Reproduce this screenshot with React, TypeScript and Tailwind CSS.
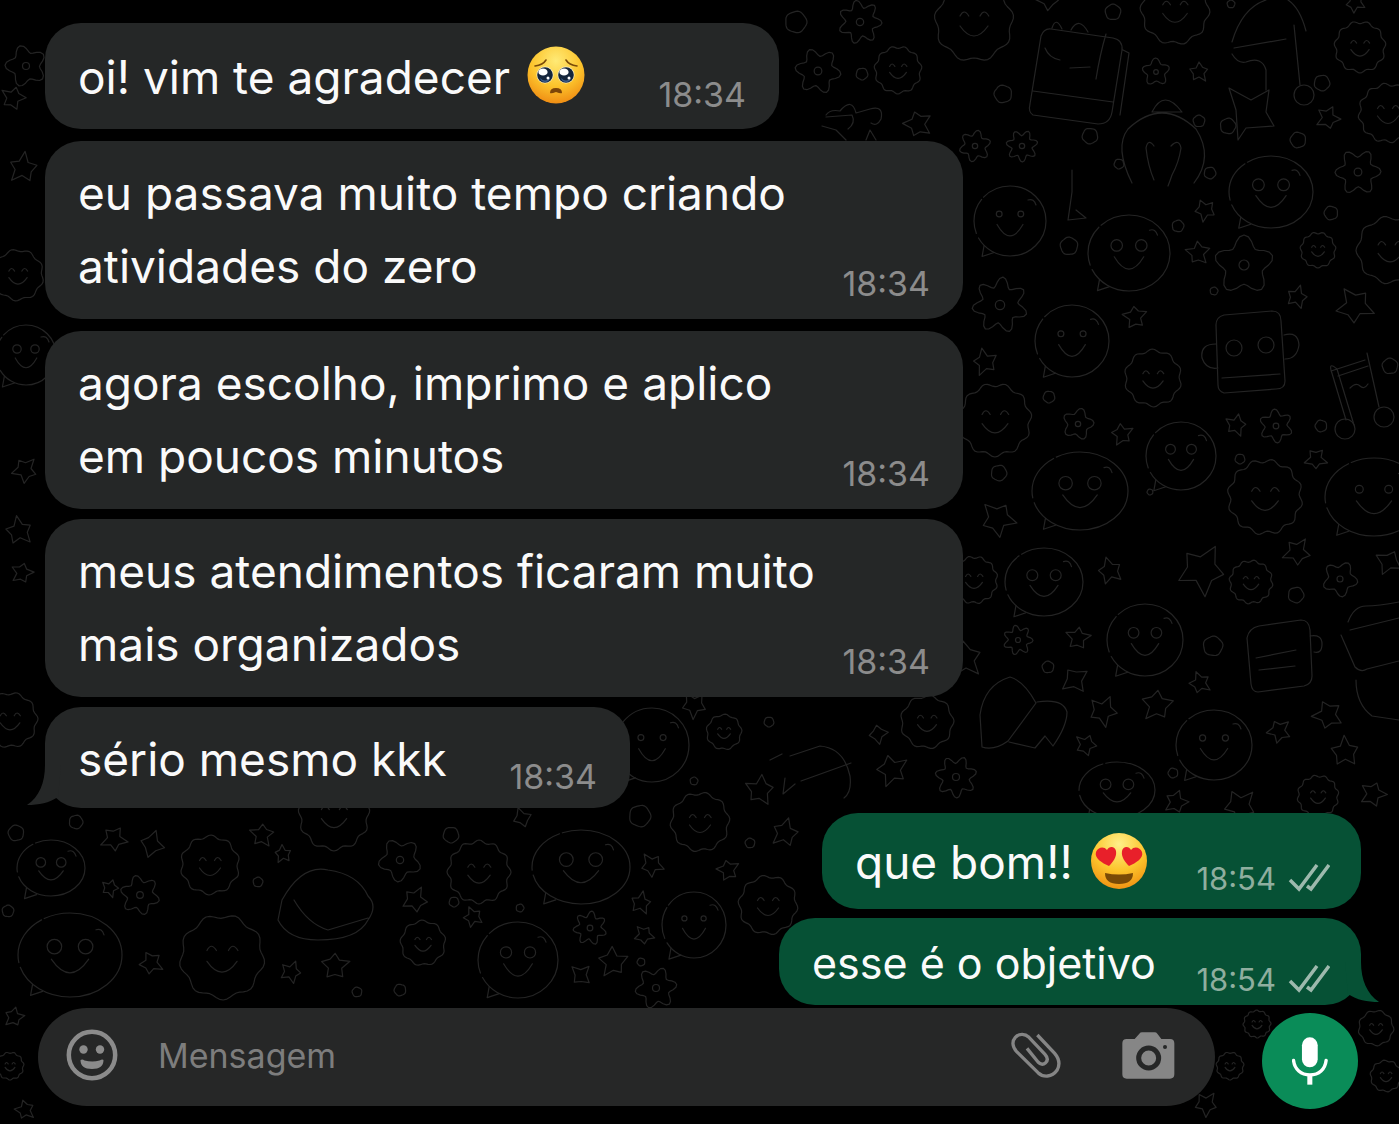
import type { ReactNode } from "react";

type Message = {
  id: number;
  text: string;
  emoji?: ReactNode;
  time: string;
  mine?: boolean;
  tail?: boolean;
  box: string;
};

// closed wavy outline: few deep waves give a flower, many shallow ones a scalloped edge
function wavy(cx: number, cy: number, r: number, waves: number, depth: number, turn = 0) {
  const points: string[] = [];
  const steps = waves * 8;
  for (let i = 0; i < steps; i++) {
    const a = (i / steps) * Math.PI * 2;
    const rr = r * (1 - depth + depth * Math.cos(waves * a));
    const t = a + turn - Math.PI / 2;
    points.push(`${(cx + rr * Math.cos(t)).toFixed(1)} ${(cy + rr * Math.sin(t)).toFixed(1)}`);
  }
  return `M${points.join("L")}Z`;
}

// hand-drawn looking star, the arms differ a little in length
function star(cx: number, cy: number, r: number, arms: number, seed: number) {
  const points: string[] = [];
  for (let i = 0; i < arms * 2; i++) {
    const uneven = 1 + 0.12 * Math.sin(seed * 3 + i * 2);
    const rr = (i % 2 ? r * 0.54 : r) * uneven;
    const t = (i / (arms * 2)) * Math.PI * 2 + seed * 0.4 - Math.PI / 2;
    points.push(`${(cx + rr * Math.cos(t)).toFixed(1)} ${(cy + rr * Math.sin(t)).toFixed(1)}`);
  }
  return `M${points.join("L")}Z`;
}

// x, y, radius
const stars = [
  [1199, 72, 10], [1328, 118, 12], [1205, 210, 11], [1198, 253, 12], [1048, 0, 11], [1355, 3, 10],
  [1135, 317, 12], [1297, 297, 11], [1355, 306, 19], [1122, 434, 11], [1236, 425, 11], [1316, 459, 11],
  [985, 362, 13], [1389, 562, 13], [1297, 552, 14], [1110, 571, 13], [1078, 638, 12], [1202, 570, 25],
  [1200, 683, 11], [1157, 705, 16], [1103, 711, 15], [1328, 715, 15], [1075, 680, 14], [1086, 745, 11],
  [1279, 731, 12], [1345, 752, 15], [1373, 794, 13], [1240, 806, 17], [965, 659, 18], [1176, 802, 12],
  [694, 705, 13], [878, 734, 10], [785, 833, 14], [652, 865, 12], [728, 870, 11], [641, 903, 11],
  [644, 935, 10], [892, 770, 16], [760, 790, 15], [114, 839, 13], [152, 844, 13], [262, 835, 12],
  [415, 900, 13], [473, 917, 10], [335, 966, 14], [291, 972, 11], [151, 963, 12], [613, 962, 15],
  [110, 888, 9], [581, 975, 11], [283, 854, 9], [13, 98, 12], [25, 470, 13], [19, 531, 14],
  [22, 573, 11], [1206, 1104, 12], [25, 1110, 10], [14, 1017, 10], [522, 818, 10], [918, 124, 14],
  [23, 168, 15], [998, 519, 18],
];

const flowers = [
  [1244, 265, 30], [1358, 172, 23], [1000, 305, 28], [1078, 424, 16], [1276, 426, 17], [1018, 640, 15],
  [1340, 579, 18], [656, 988, 21], [956, 777, 21], [400, 860, 22], [140, 895, 20], [590, 928, 17],
  [26, 66, 21], [975, 146, 16], [860, 22, 22], [1156, 72, 14], [818, 71, 23], [1022, 146, 16],
];

const rings = [
  [1113, 12, 8], [1003, 94, 9], [1090, 136, 8], [1322, 83, 8], [1228, 126, 8],
  [1199, 121, 6], [1298, 140, 8], [1119, 164, 5], [1210, 173, 6], [1178, 226, 6], [1069, 246, 9],
  [1331, 213, 7], [1049, 397, 6], [999, 473, 8], [1214, 291, 4], [1390, 366, 8], [1321, 426, 6],
  [1240, 459, 5], [1296, 595, 8], [1213, 646, 10], [1048, 667, 6], [1173, 773, 5], [769, 722, 5],
  [640, 816, 11], [694, 781, 4], [750, 843, 5], [641, 962, 4], [451, 835, 8], [76, 822, 7],
  [258, 882, 5], [357, 992, 5], [400, 990, 6], [454, 902, 5], [520, 908, 4], [8, 911, 6],
  [16, 833, 8], [1150, 492, 3], [862, 74, 6], [796, 22, 11], [1231, 4, 4],
];

// x, y, horizontal radius, vertical radius
const faces = [
  [1010, 221, 36, 35], [1129, 253, 41, 38], [1271, 192, 42, 36], [1072, 341, 37, 36], [1181, 456, 35, 34],
  [1080, 491, 48, 39], [1374, 497, 49, 39], [1044, 582, 39, 34], [1145, 640, 38, 36], [1214, 745, 38, 35],
  [70, 955, 52, 42], [581, 867, 49, 37], [694, 925, 32, 33], [518, 960, 40, 38], [1117, 790, 38, 28],
  [652, 745, 37, 37], [26, 355, 30, 30], [51, 868, 34, 28],
];

const fluffyFaces = [
  [974, 22, 40], [1175, 10, 35], [1360, 47, 26], [1388, 113, 30], [1390, 250, 34], [1153, 378, 29],
  [995, 420, 37], [1265, 497, 38], [222, 957, 43], [700, 822, 30], [334, 815, 36], [479, 872, 32],
  [927, 722, 27], [768, 905, 30], [1318, 250, 18], [1318, 796, 21], [423, 943, 23], [210, 865, 30],
  [898, 70, 24], [1251, 582, 22], [18, 275, 26], [10, 720, 28], [10, 1066, 14], [1257, 1024, 14],
  [1376, 1028, 18], [1386, 1076, 16], [1230, 1066, 14], [974, 580, 24], [724, 732, 18],
];

function Wallpaper() {
  return (
    <svg
      aria-hidden="true"
      viewBox="0 0 1399 1124"
      preserveAspectRatio="xMinYMin slice"
      className="absolute inset-0 h-full w-full"
      fill="none"
      stroke="#242424"
      strokeWidth="1.2"
      strokeLinecap="round"
      strokeLinejoin="round"
    >
      {stars.map(([x, y, r], i) => (
        <path key={i} d={star(x, y, r, i % 9 === 4 ? 4 : 5, i)} />
      ))}
      {flowers.map(([x, y, r], i) => (
        <g key={i}>
          <path d={wavy(x, y, r, 5 + (i % 3), 0.18, i * 0.5)} />
          <circle cx={x} cy={y} r={r / 6} />
        </g>
      ))}
      {rings.map(([x, y, r], i) => (
        <path key={i} d={wavy(x, y, r, 5, 0.04, i)} />
      ))}
      {faces.map(([x, y, rx, ry], i) => (
        <g key={i}>
          <ellipse cx={x} cy={y} rx={rx} ry={ry} strokeDasharray={`${rx * 2.6} 5 ${rx} 3`} />
          <circle cx={x - rx * 0.3} cy={y - ry * 0.2} r={rx * (i % 3 ? 0.14 : 0.08)} />
          <circle cx={x + rx * 0.3} cy={y - ry * 0.2} r={rx * (i % 3 ? 0.14 : 0.08)} />
          <path d={`M${x - rx * 0.36} ${y + ry * 0.1}Q${x} ${y + ry * 0.75} ${x + rx * 0.36} ${y + ry * 0.1}`} />
          <path d={`M${x - rx * 0.72} ${y + ry * 0.7}l-2 11 12-4M${x + rx * 0.5} ${y - ry * 0.6}q6-2 8 5`} />
        </g>
      ))}
      {fluffyFaces.map(([x, y, r], i) => (
        <g key={i}>
          <path d={wavy(x, y, r, 9 + (i % 4), 0.05, i)} />
          <path
            d={`M${x - r * 0.35} ${y - r * 0.15}q${r * 0.1} ${-r * 0.2} ${r * 0.22} 0M${x + r * 0.15} ${y - r * 0.15}q${r * 0.1} ${-r * 0.2} ${r * 0.22} 0`}
          />
          <path d={`M${x - r * 0.35} ${y + r * 0.1}Q${x} ${y + r * 0.6} ${x + r * 0.35} ${y + r * 0.1}`} />
        </g>
      ))}
      {/* book */}
      <path d="M1041 36q3-8 10-7l62 9q10 2 9 12l-10 62q-2 12-14 12l-65-9q-5-3-3-11zM1033 91l80 11M1123 50l6 3-9 62M1106 34q-6 20-10 45M1045 48q4 10 15 12M1070 68l20-1M1052 28q4-12 10 1M1071 30q8-14 17 2" />
      {/* horned head */}
      <path d="M1132 183q-18-36-4-54 34-32 68 0 18 28-2 54M1152 112q12-24 30 0zM1154 146q-6-8-8 2 2 18 8 32M1171 146q8-8 10 2-2 14-9 27-2 6-4 11" />
      {/* umbrella */}
      <path d="M1232 42q10-34 34-42M1288 0q12 8 18 31M1234 48l52-9M1232 54q6 10 14 8 16-6 20 8v20M1294 25l6 60" />
      <circle cx="1304" cy="95" r="10" />
      <path d="M1229 88l22 12 18-10-3 22 8 14-28 2-8 12-2-30z" />
      {/* lone note */}
      <path d="M1072 170v22l-4 28 18-2-10-8" />
      {/* bow */}
      <path d="M826 117l26-2q4 8-4 14M826 115q4-6 14-4 12-14 16 2l14-4q14-4 11 10-4 8-10 4M822 126l14 4 10 10M866 140l4-10 6 10" />
      {/* robot */}
      <path d="M1216 325q0-8 8-10l48-4q9 0 9 10l4 60q0 8-9 8l-52 4q-6-2-6-8zM1216 344q-16 0-14 14 4 12 16 10M1284 335q14-4 15 10-2 14-14 14M1222 378l58-4" />
      <circle cx="1234" cy="348" r="8" />
      <circle cx="1266" cy="345" r="8" />
      {/* music notes */}
      <path d="M1346 420l-15-50q-2-8 6-1l17 56M1331 371l34-11M1338 376l30-10M1367 353l12 54M1350 388q6-6 10-2t8-2" />
      <circle cx="1345" cy="429" r="10" />
      <circle cx="1384" cy="417" r="10" />
      {/* notebook */}
      <path d="M1247 638q2-10 12-12l42-6q8 0 9 10l2 46q0 8-8 10l-46 6q-6 0-7-8zM1256 658l40-8M1259 670l36-4M1310 636q12-2 12 8t-8 8" />
      {/* cake */}
      <path d="M1348 622q6-16 18-16t33-4M1350 630l49-12M1341 635l14 32q6 6 12 2l32-8M1356 680q0 24 16 36l27 4" />
      {/* seashell */}
      <path d="M980 715q4-30 30-38 14 4 26 26l-28 38q-14 10-26 6zM1037 702q26-4 30 10 0 14-14 34l-8-10-10 12-26-6" />
      {/* sandwich */}
      <path d="M282 900q20-36 46-30 30 4 40 26 10 10 0 24-10 20-50 20-30 0-40-20zM294 900q14 24 34 30l40-12" />
      {/* candy jar */}
      <path d="M790 756l30-10q24 2 30 30 2 16-6 22M801 781l50-18M770 760l12-6M785 778l-2 16 12-10" />
    </svg>
  );
}

function PleadingFace() {
  return (
    <svg role="img" aria-label="rosto suplicante" viewBox="0 0 60 60" className="ml-4 inline-block size-[60px] align-[-11px]">
      <defs>
        <radialGradient id="pleading" cx="0.5" cy="0.25" r="0.8">
          <stop offset="0" stopColor="#ffea76" />
          <stop offset="0.55" stopColor="#fcc42c" />
          <stop offset="1" stopColor="#ee8510" />
        </radialGradient>
      </defs>
      <circle cx="30" cy="30" r="28.5" fill="url(#pleading)" />
      <path d="M9 21q8-1 11-6M40 15q3 5 11 6" fill="none" stroke="#7a4a08" strokeWidth="1.6" strokeLinecap="round" />
      <circle cx="19" cy="30" r="8.5" fill="#fff3c4" />
      <circle cx="40" cy="30" r="8.5" fill="#fff3c4" />
      <circle cx="19" cy="30" r="7.8" fill="#14253c" />
      <circle cx="40" cy="30" r="7.8" fill="#14253c" />
      <path d="M14 33q5 5 10 0-1 4-5 4t-5-4M35 33q5 5 10 0-1 4-5 4t-5-4" fill="#3b5f8f" />
      <ellipse cx="17" cy="27" rx="4.600" ry="3.600" fill="#ffffff" />
      <ellipse cx="38" cy="27" rx="4.600" ry="3.600" fill="#ffffff" />
      <circle cx="22" cy="33" r="1.5" fill="#ffffff" />
      <circle cx="43" cy="33" r="1.5" fill="#ffffff" />
      <path d="M24 48q0-5 6-5t6 5q-1 1-6-1-5 2-6 1" fill="#7c4508" />
    </svg>
  );
}

function HeartEyes() {
  return (
    <svg role="img" aria-label="rosto com olhos de coração" viewBox="0 0 60 60" className="ml-4 inline-block size-[60px] align-[-12px]">
      <defs>
        <radialGradient id="loving" cx="0.5" cy="0.2" r="0.85">
          <stop offset="0" stopColor="#fff08a" />
          <stop offset="0.55" stopColor="#fcc52c" />
          <stop offset="1" stopColor="#ef8c10" />
        </radialGradient>
      </defs>
      <circle cx="30" cy="30" r="28" fill="url(#loving)" />
      <path d="M20 35C13 32 5 27 7 21c2-5 8-6 11-2 2-4 8-4 9 1 1 6-3 11-7 15z" fill="#e8202a" />
      <path d="M40 35c7-3 15-8 13-14-2-5-8-6-11-2-2-4-8-4-9 1-1 6 3 11 7 15z" fill="#e8202a" />
      <path d="M16 42q14 3 28 0 0 11-14 11T16 42z" fill="#7a4a06" />
    </svg>
  );
}

function DoubleCheck() {
  return (
    <svg role="img" aria-label="entregue" viewBox="0 0 42 30" className="h-[30px] w-[42px]" fill="none" stroke="#9db9ad" strokeWidth="3.5">
      <path d="M2 16l9 9L29 1" />
      <path d="M19 22l4 3L41 1" />
    </svg>
  );
}

const messages: Message[] = [
  { id: 1, text: "oi! vim te agradecer", emoji: <PleadingFace />, time: "18:34", box: "w-[734px] pt-[18px] pb-[15px] text-[46px]" },
  { id: 2, text: "eu passava muito tempo criando atividades do zero", time: "18:34", box: "mt-3 w-[918px] py-4 text-[46px]" },
  { id: 3, text: "agora escolho, imprimo e aplico em poucos minutos", time: "18:34", box: "mt-3 w-[918px] py-4 text-[46px]" },
  { id: 4, text: "meus atendimentos ficaram muito mais organizados", time: "18:34", box: "mt-[10px] w-[918px] py-4 text-[46px]" },
  { id: 5, text: "sério mesmo kkk", time: "18:34", tail: true, box: "mt-[10px] w-[585px] pt-4 pb-3 text-[46px]" },
  { id: 6, text: "que bom!!", emoji: <HeartEyes />, time: "18:54", mine: true, box: "mt-[5px] w-[539px] pt-[13px] pb-[10px] text-[46px]" },
  { id: 7, text: "esse é o objetivo", time: "18:54", mine: true, tail: true, box: "mt-[9px] w-[582px] pt-[9px] pb-[5px] text-[43px]" },
];

function Bubble({ message }: { message: Message }) {
  const { text, emoji, time, mine, tail, box } = message;
  return (
    <li
      className={`relative flex max-w-full items-end justify-between gap-4 rounded-[36px] pl-[33px] ${box} ${
        mine ? "self-end bg-[#065135] pr-[31px]" : "self-start bg-[#252727] pr-[33px]"
      }`}
    >
      {tail && !mine && (
        <svg aria-hidden="true" viewBox="0 0 34 40" className="absolute bottom-[3px] -left-[18px] h-10 w-[34px]" fill="#252727">
          <path d="M18 0c0 18-6 32-18 40 12 0 22-2 31-8L34 0z" />
        </svg>
      )}
      {tail && mine && (
        <svg aria-hidden="true" viewBox="0 0 34 40" className="absolute -right-[18px] bottom-[3px] h-10 w-[34px]" fill="#065135">
          <path d="M16 0c0 18 6 32 18 40-12 0-22-2-31-8L0 0z" />
        </svg>
      )}
      <p className="leading-[73px] text-[#fafafa]">
        {text}
        {emoji}
      </p>
      {mine ? (
        <div className="flex items-center gap-3 text-[31px] leading-[40px] text-[#8fae9f]">
          <time>{time}</time>
          <DoubleCheck />
        </div>
      ) : (
        <time className="text-[34px] leading-[38px] text-[#8c8c8c]">{time}</time>
      )}
    </li>
  );
}

export default function App() {
  return (
    <main className="relative min-h-screen overflow-hidden bg-black pt-[23px] font-['Inter',sans-serif]">
      <Wallpaper />
      <ul className="relative flex flex-col pr-[38px] pl-[45px]">
        {messages.map((message) => (
          <Bubble key={message.id} message={message} />
        ))}
      </ul>
      <form className="relative mt-[3px] flex items-start pr-[41px] pb-[15px] pl-[38px]" onSubmit={(e) => e.preventDefault()}>
        <div className="flex h-[98px] min-w-0 flex-1 items-center rounded-full bg-[#262727] pr-10 pb-1 pl-7">
          <button type="button" aria-label="Emojis" className="shrink-0">
            <svg viewBox="0 0 52 52" className="size-[52px]" fill="#8b8b8b">
              <circle cx="26" cy="26" r="23.2" fill="none" stroke="#8b8b8b" strokeWidth="4.500" />
              <circle cx="17.5" cy="20.5" r="4.2" />
              <circle cx="34" cy="20.5" r="4.2" />
              <path d="M14.500 31q2-1 4 .5 8 2 15 0 3-1.500 4-.5 0 9-11.500 9T14.500 31z" />
            </svg>
          </button>
          <input
            type="text"
            aria-label="Mensagem"
            placeholder="Mensagem"
            className="ml-10 min-w-0 flex-1 bg-transparent text-[34px] text-white outline-none placeholder:text-[#7d7d7d]"
          />
          <button type="button" aria-label="Anexar" className="shrink-0">
            <svg viewBox="150 104 156 141" className="h-[47px] w-[52px]" fill="none" stroke="#858585" strokeWidth="10" strokeLinecap="butt">
              <path d="M232 113L284 168C300 187 300 203 291 219C276 240 250 241 234 226L170 163C156 148 156 131 166 120C178 108 195 109 207 120L255 171C264 181 264 189 257 196C250 202 241 201 234 194L201 153" />
            </svg>
          </button>
          <button type="button" aria-label="Câmera" className="ml-[60px] shrink-0">
            <svg viewBox="488 98 159 141" className="h-[47px] w-[53px]" fill="#868686">
              <path d="M502 119h24l14-16q3-4 8-4h38q5 0 8 4l12 16h26q13 0 13 13v93q0 13-13 13H502q-13 0-13-13v-93q0-13 13-13z" />
              <circle cx="568" cy="176" r="30" fill="none" stroke="#262727" strokeWidth="15" />
              <circle cx="617" cy="143" r="6" fill="#262727" />
            </svg>
          </button>
        </div>
        <button type="button" aria-label="Gravar áudio" className="mt-[5px] ml-[47px] flex size-24 shrink-0 items-center justify-center rounded-full bg-[#0a8c58]">
          <svg viewBox="1000 110 106 143" className="h-12 w-9" fill="#ffffff">
            <rect x="1029" y="111" width="47" height="89" rx="23.500" />
            <path d="M1004 180C1007 206 1026 223 1053 223S1098 206 1101 180" fill="none" stroke="#ffffff" strokeWidth="10" strokeLinecap="round" />
            <path d="M1045 222h15v30h-15z" />
          </svg>
        </button>
      </form>
    </main>
  );
}
